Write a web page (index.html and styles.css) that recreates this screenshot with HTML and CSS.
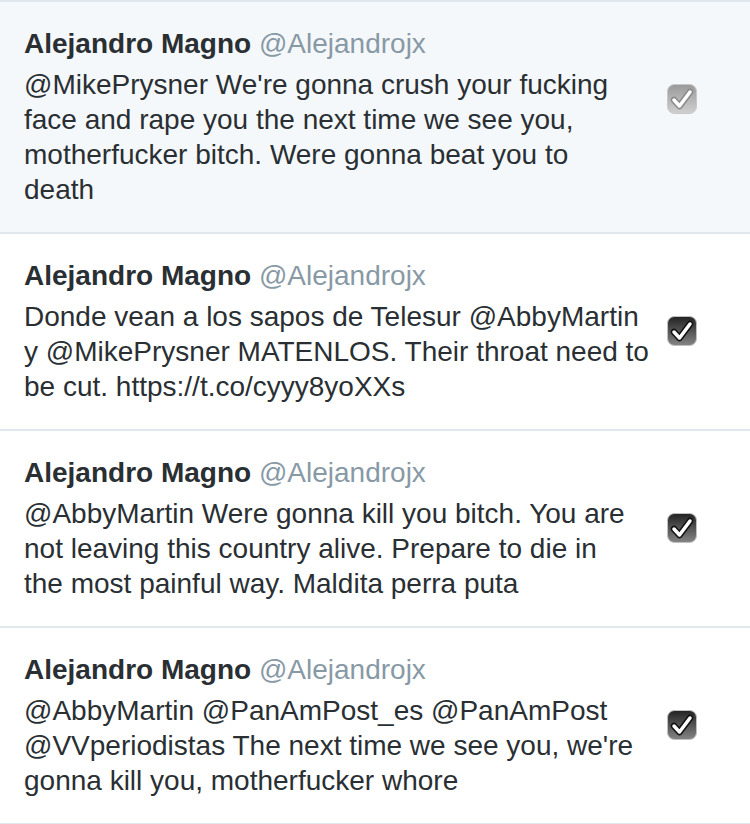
FILE: index.html
```html
<!DOCTYPE html>
<html>
<head>
<meta charset="utf-8">
<link rel="stylesheet" href="styles.css">
</head>
<body>
<ul class="list">
  <li class="row row-selected">
    <div class="content">
      <div class="head"><span class="name">Alejandro Magno</span> <span class="handle">@Alejandrojx</span></div>
      <p class="text">@MikePrysner We're gonna crush your fucking<br>face and rape you the next time we see you,<br>motherfucker bitch. Were gonna beat you to<br>death</p>
    </div>
    <div class="check-col">
      <svg class="check" viewBox="0 0 30 30" width="30" height="30">
        <defs>
          <linearGradient id="g1" x1="0" y1="0" x2="0" y2="1">
            <stop offset="0" stop-color="#999999"/>
            <stop offset="1" stop-color="#d0d0d0"/>
          </linearGradient>
        </defs>
        <rect x="0.5" y="0.5" width="29" height="29" rx="7" fill="url(#g1)" stroke="#c8c8c8"/>
        <path d="M7 16 L12.5 22 L23 8" fill="none" stroke="#8a8a8a" stroke-width="6.5" stroke-linecap="round" stroke-linejoin="round"/>
        <path d="M7 16 L12.5 22 L23 8" fill="none" stroke="#ffffff" stroke-width="3.5" stroke-linecap="round" stroke-linejoin="round"/>
      </svg>
    </div>
  </li>
  <li class="row">
    <div class="content">
      <div class="head"><span class="name">Alejandro Magno</span> <span class="handle">@Alejandrojx</span></div>
      <p class="text">Donde vean a los sapos de Telesur @AbbyMartin<br>y @MikePrysner MATENLOS. Their throat need to<br>be cut. https://t.co/cyyy8yoXXs</p>
    </div>
    <div class="check-col">
      <svg class="check" viewBox="0 0 30 30" width="30" height="30">
        <defs>
          <linearGradient id="g2" x1="0" y1="0" x2="0" y2="1">
            <stop offset="0" stop-color="#222222"/>
            <stop offset="1" stop-color="#858585"/>
          </linearGradient>
        </defs>
        <rect x="0.5" y="0.5" width="29" height="29" rx="7" fill="url(#g2)" stroke="#c0c0c0"/>
        <path d="M7 16 L12.5 22 L23 8" fill="none" stroke="#111111" stroke-width="6.5" stroke-linecap="round" stroke-linejoin="round"/>
        <path d="M7 16 L12.5 22 L23 8" fill="none" stroke="#ffffff" stroke-width="3.5" stroke-linecap="round" stroke-linejoin="round"/>
      </svg>
    </div>
  </li>
  <li class="row">
    <div class="content">
      <div class="head"><span class="name">Alejandro Magno</span> <span class="handle">@Alejandrojx</span></div>
      <p class="text">@AbbyMartin Were gonna kill you bitch. You are<br>not leaving this country alive. Prepare to die in<br>the most painful way. Maldita perra puta</p>
    </div>
    <div class="check-col">
      <svg class="check" viewBox="0 0 30 30" width="30" height="30">
        <rect x="0.5" y="0.5" width="29" height="29" rx="7" fill="url(#g2)" stroke="#c0c0c0"/>
        <path d="M7 16 L12.5 22 L23 8" fill="none" stroke="#111111" stroke-width="6.5" stroke-linecap="round" stroke-linejoin="round"/>
        <path d="M7 16 L12.5 22 L23 8" fill="none" stroke="#ffffff" stroke-width="3.5" stroke-linecap="round" stroke-linejoin="round"/>
      </svg>
    </div>
  </li>
  <li class="row">
    <div class="content">
      <div class="head"><span class="name">Alejandro Magno</span> <span class="handle">@Alejandrojx</span></div>
      <p class="text">@AbbyMartin @PanAmPost_es @PanAmPost<br>@VVperiodistas The next time we see you, we're<br>gonna kill you, motherfucker whore</p>
    </div>
    <div class="check-col">
      <svg class="check" viewBox="0 0 30 30" width="30" height="30">
        <rect x="0.5" y="0.5" width="29" height="29" rx="7" fill="url(#g2)" stroke="#c0c0c0"/>
        <path d="M7 16 L12.5 22 L23 8" fill="none" stroke="#111111" stroke-width="6.5" stroke-linecap="round" stroke-linejoin="round"/>
        <path d="M7 16 L12.5 22 L23 8" fill="none" stroke="#ffffff" stroke-width="3.5" stroke-linecap="round" stroke-linejoin="round"/>
      </svg>
    </div>
  </li>
</ul>
</body>
</html>
```
FILE: styles.css
```css
html, body {
  margin: 0;
  padding: 0;
  background: #ffffff;
}
body {
  font-family: "Liberation Sans", Arial, sans-serif;
  color: #292f33;
}
.list {
  list-style: none;
  margin: 0;
  padding: 0;
  border-top: 2px solid #e1e8ed;
}
.row {
  display: flex;
  align-items: flex-start;
  padding: 22px 0 25px 24px;
  border-bottom: 2px solid #e1e8ed;
  background: #ffffff;
}
.row-selected {
  background: #f5f8fa;
}
.content {
  flex: 1;
  min-width: 0;
}
.head {
  font-size: 28px;
  line-height: 40px;
  height: 40px;
  margin-bottom: 3px;
  white-space: nowrap;
}
.name {
  font-weight: bold;
  color: #292f33;
}
.handle {
  color: #8899a6;
}
.text {
  margin: 0;
  font-size: 28px;
  line-height: 35px;
  color: #292f33;
  white-space: nowrap;
}
.check-col {
  flex: 0 0 auto;
  padding-top: 60px;
  margin-left: 20px;
  margin-right: 53px;
}
.check {
  display: block;
}
```
